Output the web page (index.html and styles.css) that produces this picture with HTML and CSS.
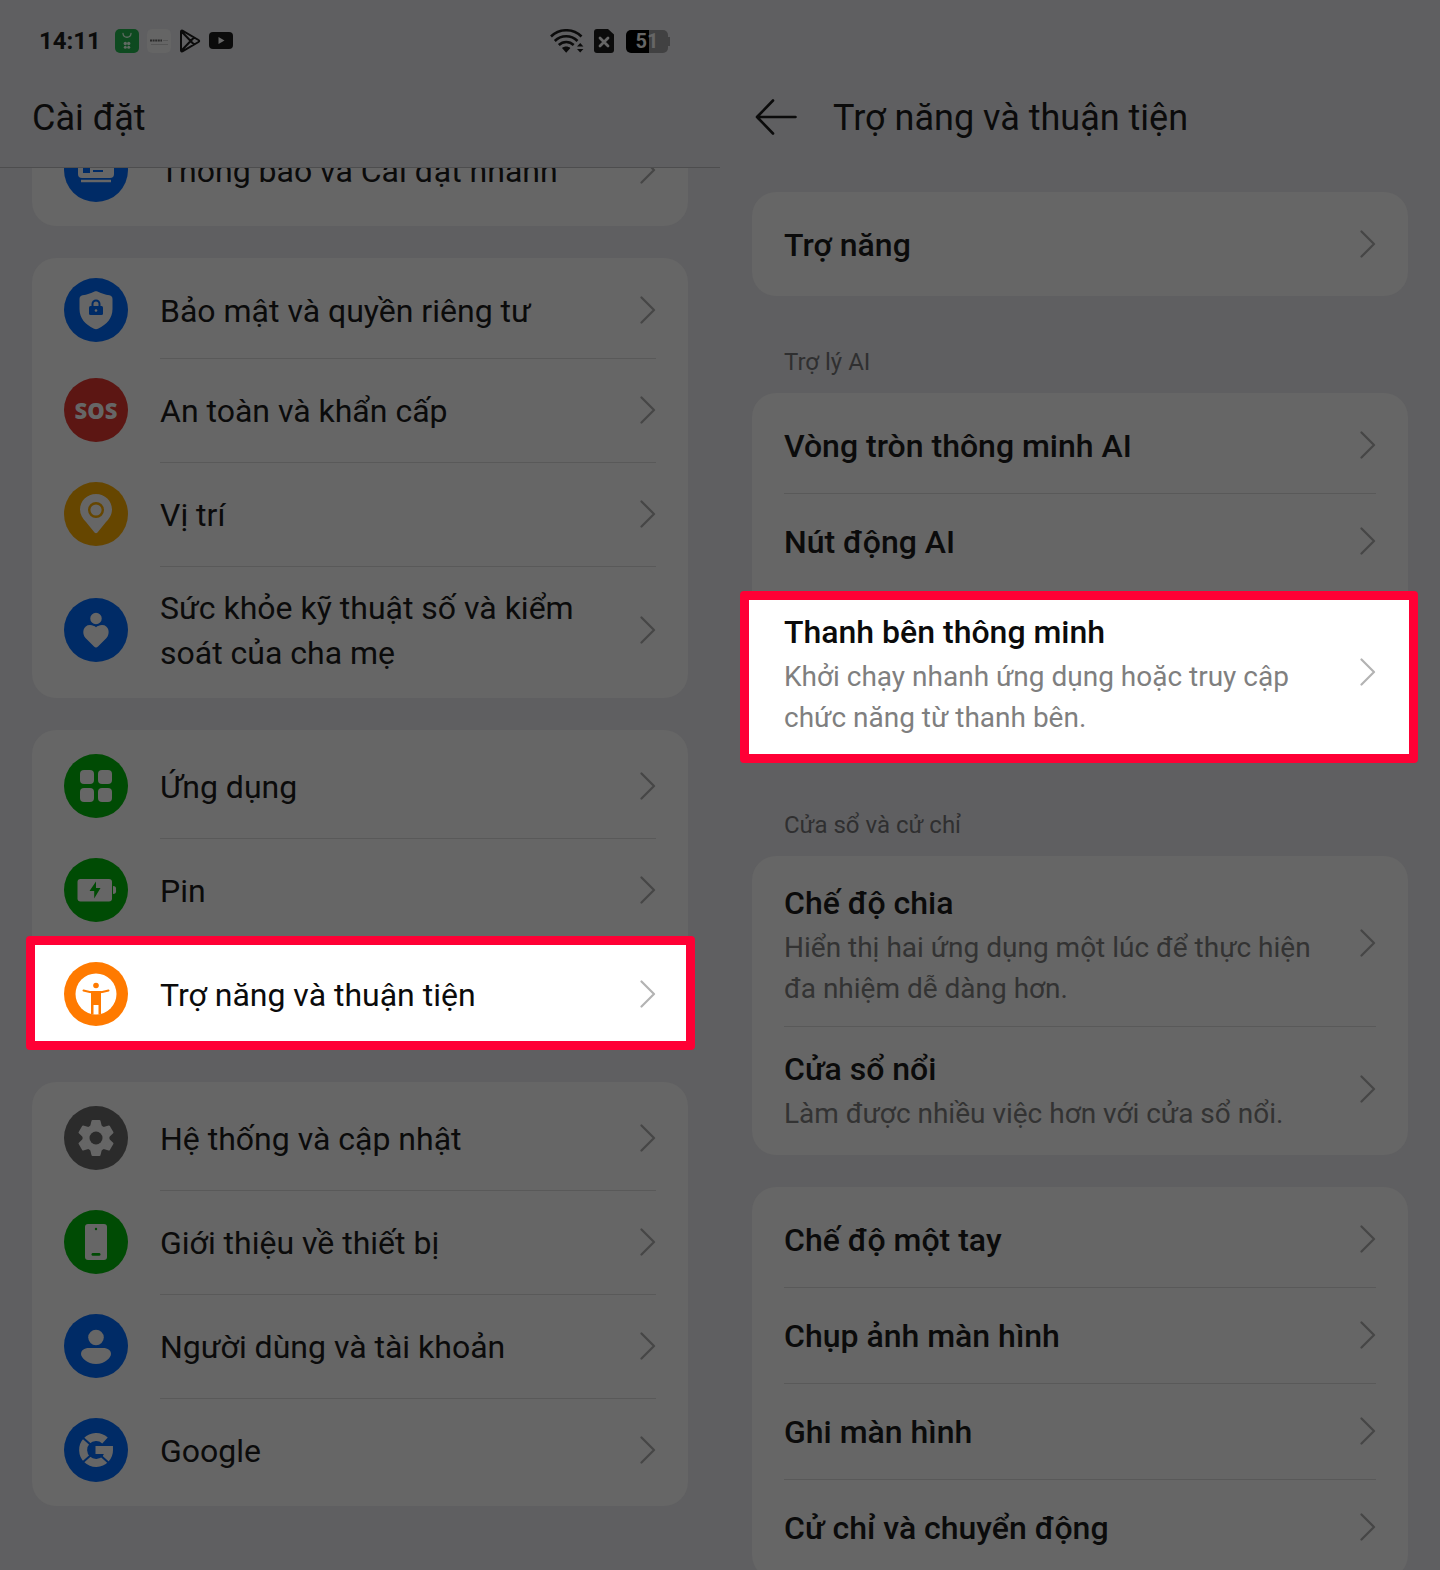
FILE: index.html
```html
<!DOCTYPE html>
<html lang="vi">
<head>
    <meta charset="UTF-8">
    <meta name="viewport" content="width=device-width, initial-scale=1.0">
    <title>Cài đặt</title>
    <link rel="stylesheet" href="styles.css">
</head>
<body>
    <svg class="defs" aria-hidden="true">
        <symbol id="chevron" viewBox="0 0 16 28">
            <path d="M1.5 1.5 14 14 1.5 26.5" fill="none" stroke="currentColor" stroke-width="2.2" stroke-linecap="round" stroke-linejoin="round"/>
        </symbol>
    </svg>
    <div class="screens">
        <section class="screen settings">
            <header class="top with-line">
                <div class="status">
                    <span class="time">14:11</span>
                    <svg class="app-icon" width="24" height="24" viewBox="0 0 24 24">
                        <rect width="24" height="24" rx="5" fill="#0e4a20"/>
                        <path d="M8 4.500c.5 5 7.500 5 8 0" fill="none" stroke="#5f6b62" stroke-width="1.300" stroke-linecap="round"/>
                        <g fill="#5f6b62"><circle cx="10.300" cy="14.500" r="1.700"/><circle cx="13.700" cy="14.500" r="1.700"/><circle cx="10.300" cy="18.300" r="1.500"/><circle cx="13.700" cy="18.300" r="1.500"/></g>
                    </svg>
                    <svg class="app-icon" width="24" height="24" viewBox="0 0 24 24">
                        <rect width="24" height="24" rx="5" fill="#656565"/>
                        <path d="M3 11.500h12" stroke="#2b2b2b" stroke-width="2" stroke-dasharray="2 .6"/>
                        <path d="M16 11.500h5M4 15.500h17" stroke="#555" stroke-width="1"/>
                    </svg>
                    <svg class="app-icon play" width="22" height="24" viewBox="0 0 22 24">
                        <path d="M2 2.800v18.400c0 1 .9 1.500 1.800 1L19.500 13c.9-.5.900-1.500 0-2L3.800 1.800C2.900 1.300 2 1.800 2 2.800zM2.500 2.500l12.500 13M2.500 21.500 15 8.500" fill="none" stroke="#0b0b0b" stroke-width="2" stroke-linejoin="round"/>
                    </svg>
                    <svg class="app-icon" width="24" height="18" viewBox="0 0 24 18">
                        <rect width="24" height="17" rx="4" fill="#0b0b0b"/>
                        <path d="M9.500 5v7l6-3.500z" fill="#666"/>
                    </svg>
                    <span class="spacer"></span>
                    <svg class="wifi" width="34" height="24" viewBox="0 0 34 24">
                        <g fill="none" stroke="#0b0b0b" stroke-width="2.600">
                            <path d="M1 7.500C9.500-.8 23-.8 31.500 7.500M4.800 12c6.500-6.300 16.200-6.300 22.700 0M8.800 16c4.300-4 10.600-4 14.900 0"/>
                        </g>
                        <path d="M12 19c2.400-2 6-2 8.400 0l-4.200 4.800zM27 17.500l3.200-3.500 3.200 3.500zM27 20l3.200 3.500 3.200-3.500z" fill="#0b0b0b"/>
                    </svg>
                    <svg class="sim" width="20" height="24" viewBox="0 0 20 24">
                        <path d="M3 0h11l6 5.500V21a3 3 0 0 1-3 3H3a3 3 0 0 1-3-3V3a3 3 0 0 1 3-3z" fill="#0b0b0b"/>
                        <path d="m6 9 8 8m0-8-8 8" stroke="#666" stroke-width="2.800" stroke-linecap="round"/>
                    </svg>
                    <span class="battery"><span class="five">5</span><span class="one">1</span></span>
                </div>
                <div class="title-bar"><h1>Cài đặt</h1></div>
            </header>
            <main class="list">
                <nav class="card scrolled">
                    <a class="row" href="#">
                        <svg class="icon" viewBox="0 0 64 64">
                            <circle cx="32" cy="32" r="32" fill="#002b66"/>
                            <rect x="14" y="16" width="36" height="24" rx="4" fill="#666"/>
                            <path d="M19 30h7v5h-7zM29 32h10v2H29z" fill="#002b66"/>
                            <path d="M17 43h30" stroke="#666" stroke-width="2.500"/>
                        </svg>
                        <span class="row-main"><span class="name">Thông báo và Cài đặt nhanh</span><svg class="chevron"><use href="#chevron"/></svg></span>
                    </a>
                </nav>
                <nav class="card">
                    <a class="row short" href="#">
                        <svg class="icon" viewBox="0 0 64 64">
                            <circle cx="32" cy="32" r="32" fill="#002b66"/>
                            <path d="M30.500 13.500c1-.5 2-.5 3 0 3.500 2 7.500 3 12 3.800 1.800.4 3 1.700 3 3.700v10c0 9-5.500 15.500-14.500 19.700-1.300.6-2.700.6-4 0C21 46.500 15.500 40 15.500 31V21c0-2 1.200-3.300 3-3.700 4.500-.8 8.500-1.800 12-3.800z" fill="#666"/>
                            <rect x="25" y="28" width="14" height="9" rx="1.500" fill="#002b66"/>
                            <path d="M28.500 29v-3a3.500 3.500 0 0 1 7 0v3" fill="none" stroke="#002b66" stroke-width="2"/>
                            <circle cx="32" cy="32.500" r="1.300" fill="#666"/>
                        </svg>
                        <span class="row-main"><span class="name">Bảo mật và quyền riêng tư</span><svg class="chevron"><use href="#chevron"/></svg></span>
                    </a>
                    <a class="row" href="#">
                        <span class="icon sos">SOS</span>
                        <span class="row-main"><span class="name">An toàn và khẩn cấp</span><svg class="chevron"><use href="#chevron"/></svg></span>
                    </a>
                    <a class="row" href="#">
                        <svg class="icon" viewBox="0 0 64 64">
                            <circle cx="32" cy="32" r="32" fill="#664600"/>
                            <path d="M32 12c9 0 16 7 16 15.500 0 5-2.500 9-6 12.500l-8.500 10.500c-1 1-2 1-3 0L22 40c-3.500-3.500-6-7.500-6-12.500C16 19 23 12 32 12z" fill="#666"/>
                            <circle cx="32" cy="28" r="6.800" fill="none" stroke="#664600" stroke-width="2.400"/>
                        </svg>
                        <span class="row-main"><span class="name">Vị trí</span><svg class="chevron"><use href="#chevron"/></svg></span>
                    </a>
                    <a class="row tall" href="#">
                        <svg class="icon" viewBox="0 0 64 64">
                            <circle cx="32" cy="32" r="32" fill="#002b66"/>
                            <path d="M30 48.500 21.500 40C17.500 35.500 19 27 26 27c2.500 0 4.500 1 6 2.200C33.500 28 35.500 27 38 27c7 0 8.500 8.500 4.500 13L34 48.500c-1.200 1.200-2.800 1.200-4 0z" fill="#666"/>
                            <circle cx="32" cy="20.500" r="6.500" fill="#666" stroke="#002b66" stroke-width="1.500"/>
                        </svg>
                        <span class="row-main"><span class="name">Sức khỏe kỹ thuật số và kiểm soát của cha mẹ</span><svg class="chevron"><use href="#chevron"/></svg></span>
                    </a>
                </nav>
                <nav class="card">
                    <a class="row" href="#">
                        <svg class="icon" viewBox="0 0 64 64">
                            <circle cx="32" cy="32" r="32" fill="#004b04"/>
                            <g fill="#666"><rect x="16" y="16" width="14" height="14" rx="4"/><rect x="34" y="16" width="14" height="14" rx="4"/><rect x="16" y="34" width="14" height="14" rx="4"/><rect x="34" y="34" width="14" height="14" rx="4"/></g>
                        </svg>
                        <span class="row-main"><span class="name">Ứng dụng</span><svg class="chevron"><use href="#chevron"/></svg></span>
                    </a>
                    <a class="row" href="#">
                        <svg class="icon" viewBox="0 0 64 64">
                            <circle cx="32" cy="32" r="32" fill="#004b04"/>
                            <rect x="13.500" y="21" width="34.500" height="22.500" rx="3" fill="#666"/>
                            <path d="M49 28c4 0 3 3.500 3 4s1 4-3 4z" fill="#666"/>
                            <path d="M32 23.500 25.500 33h4.700v7.500L36.500 30H32z" fill="#004b04"/>
                        </svg>
                        <span class="row-main"><span class="name">Pin</span><svg class="chevron"><use href="#chevron"/></svg></span>
                    </a>
                    <a class="row lit" href="#">
                        <svg class="icon" viewBox="0 0 64 64">
                            <circle cx="32" cy="32" r="32" fill="#ff7a00"/>
                            <circle cx="32" cy="32" r="20.500" fill="#fff"/>
                            <circle cx="32" cy="23.500" r="2.800" fill="#ff7a00"/>
                            <path d="M19.500 28.500c8 2.500 17 2.500 25 0" fill="none" stroke="#ff7a00" stroke-width="2" stroke-linecap="round"/>
                            <path d="M27 29h10v23.500h-2.500v-9.500h-5v9.500H27z" fill="#ff7a00"/>
                        </svg>
                        <span class="row-main"><span class="name">Trợ năng và thuận tiện</span><svg class="chevron"><use href="#chevron"/></svg></span>
                    </a>
                </nav>
                <nav class="card">
                    <a class="row" href="#">
                        <svg class="icon" viewBox="0 0 64 64">
                            <circle cx="32" cy="32" r="32" fill="#2b2b2b"/>
                            <g fill="#666" stroke="#666" stroke-width="2" stroke-linejoin="round">
                                <circle cx="32" cy="32" r="12.500"/>
                                <path id="tooth" d="M28.500 15h7l1.500 6h-10zM28.500 49h7l1.500-6h-10z"/>
                                <use href="#tooth" transform="rotate(60 32 32)"/>
                                <use href="#tooth" transform="rotate(120 32 32)"/>
                            </g>
                            <circle cx="32" cy="32" r="6.500" fill="#2b2b2b"/>
                        </svg>
                        <span class="row-main"><span class="name">Hệ thống và cập nhật</span><svg class="chevron"><use href="#chevron"/></svg></span>
                    </a>
                    <a class="row" href="#">
                        <svg class="icon" viewBox="0 0 64 64">
                            <circle cx="32" cy="32" r="32" fill="#004b04"/>
                            <rect x="21" y="14" width="22" height="36" rx="3" fill="#666"/>
                            <circle cx="32" cy="19" r="1.200" fill="#004b04"/>
                            <rect x="27.500" y="43" width="9" height="2.800" rx="1.400" fill="#004b04"/>
                        </svg>
                        <span class="row-main"><span class="name">Giới thiệu về thiết bị</span><svg class="chevron"><use href="#chevron"/></svg></span>
                    </a>
                    <a class="row" href="#">
                        <svg class="icon" viewBox="0 0 64 64">
                            <circle cx="32" cy="32" r="32" fill="#002b66"/>
                            <circle cx="32" cy="23.500" r="7.800" fill="#666"/>
                            <path d="M25 34h14c5 0 8 2.500 8 6s-6 10-15 10-15-6.500-15-10 3-6 8-6z" fill="#666"/>
                        </svg>
                        <span class="row-main"><span class="name">Người dùng và tài khoản</span><svg class="chevron"><use href="#chevron"/></svg></span>
                    </a>
                    <a class="row" href="#">
                        <svg class="icon" viewBox="0 0 64 64">
                            <circle cx="32" cy="32" r="32" fill="#002b66"/>
                            <path d="M41 22.500A13 13 0 1 0 41.500 41 13 13 0 0 0 45 32H31.500" fill="none" stroke="#666" stroke-width="8"/>
                            <path d="M18 19l9 8M18 45l9-8M36 37l10 9" stroke="#002b66" stroke-width="2"/>
                        </svg>
                        <span class="row-main"><span class="name">Google</span><svg class="chevron"><use href="#chevron"/></svg></span>
                    </a>
                </nav>
            </main>
        </section>

        <section class="screen access">
            <header class="top">
                <div class="status"></div>
                <div class="title-bar">
                    <a class="back" href="#" aria-label="Quay lại">
                        <svg width="42" height="36" viewBox="0 0 42 36"><path d="M40.500 18H2M18 1.500 2 18l16 16.500" fill="none" stroke="#0b0b0b" stroke-width="2.600" stroke-linecap="round" stroke-linejoin="round"/></svg>
                    </a>
                    <h1>Trợ năng và thuận tiện</h1>
                </div>
            </header>
            <main class="list">
                <nav class="card">
                    <a class="row short" href="#"><span class="row-main"><span class="name">Trợ năng</span><svg class="chevron"><use href="#chevron"/></svg></span></a>
                </nav>
                <h2>Trợ lý AI</h2>
                <nav class="card">
                    <a class="row short" href="#"><span class="row-main"><span class="name">Vòng tròn thông minh AI</span><svg class="chevron"><use href="#chevron"/></svg></span></a>
                    <a class="row short" href="#"><span class="row-main"><span class="name">Nút động AI</span><svg class="chevron"><use href="#chevron"/></svg></span></a>
                    <a class="row lit" href="#">
                        <span class="row-main detail">
                            <span class="name">Thanh bên thông minh<small>Khởi chạy nhanh ứng dụng hoặc truy cập chức năng từ thanh bên.</small></span>
                            <svg class="chevron"><use href="#chevron"/></svg>
                        </span>
                    </a>
                </nav>
                <h2>Cửa sổ và cử chỉ</h2>
                <nav class="card">
                    <a class="row" href="#">
                        <span class="row-main detail">
                            <span class="name">Chế độ chia<small>Hiển thị hai ứng dụng một lúc để thực hiện đa nhiệm dễ dàng hơn.</small></span>
                            <svg class="chevron"><use href="#chevron"/></svg>
                        </span>
                    </a>
                    <a class="row" href="#">
                        <span class="row-main detail">
                            <span class="name">Cửa sổ nổi<small>Làm được nhiều việc hơn với cửa sổ nổi.</small></span>
                            <svg class="chevron"><use href="#chevron"/></svg>
                        </span>
                    </a>
                </nav>
                <nav class="card">
                    <a class="row short" href="#"><span class="row-main"><span class="name">Chế độ một tay</span><svg class="chevron"><use href="#chevron"/></svg></span></a>
                    <a class="row short" href="#"><span class="row-main"><span class="name">Chụp ảnh màn hình</span><svg class="chevron"><use href="#chevron"/></svg></span></a>
                    <a class="row short" href="#"><span class="row-main"><span class="name">Ghi màn hình</span><svg class="chevron"><use href="#chevron"/></svg></span></a>
                    <a class="row short" href="#"><span class="row-main"><span class="name">Cử chỉ và chuyển động</span><svg class="chevron"><use href="#chevron"/></svg></span></a>
                </nav>
            </main>
        </section>
    </div>
</body>
</html>
```
FILE: styles.css
```css
* {
    box-sizing: border-box;
}
body {
    margin: 0;
    font-family: Roboto, "Liberation Sans", sans-serif;
    background-color: #5f5f61;
    color: #0b0b0b;
}
a {
    color: inherit;
    text-decoration: none;
}
.defs {
    display: none;
}
.screens {
    display: grid;
    grid-template-columns: 1fr 1fr;
    height: 100vh;
    overflow: hidden;
}
.screen {
    min-width: 0;
}
.top {
    height: 168px;
}
.with-line {
    border-bottom: 1px solid #4d4d4e;
}
.status {
    display: flex;
    align-items: center;
    height: 66px;
    padding: 16px 52px 0 39px;
}
.time {
    margin-right: 14px;
    font-size: 24px;
    font-weight: 700;
}
.app-icon {
    margin-right: 8px;
}
.spacer {
    flex: 1;
}
.sim {
    margin: 0 12px 0 10px;
}
.battery {
    position: relative;
    display: flex;
    justify-content: center;
    width: 42px;
    height: 23px;
    border-radius: 5px;
    background: linear-gradient(90deg, #000 55%, #414142 55%);
    font-size: 20px;
    line-height: 23px;
    font-weight: 700;
    color: #666;
}
.battery::after {
    content: "";
    position: absolute;
    top: 7px;
    right: -2px;
    width: 2px;
    height: 9px;
    background: #414142;
}
.title-bar {
    display: flex;
    align-items: center;
    height: 101px;
    padding: 0 32px;
}
.back {
    display: flex;
    margin: 0 36px 0 3px;
}
h1 {
    margin: 0;
    padding-top: 2px;
    font-size: 36px;
    font-weight: 400;
}
h2 {
    margin: 0;
    padding: 50px 32px 15px;
    font-size: 24px;
    line-height: 32px;
    font-weight: 400;
    color: #2f2f30;
}
.list {
    padding: 0 32px;
}
.settings .list {
    overflow: hidden;
}
.access .list {
    padding-top: 24px;
}
.card {
    padding: 4px 0;
    border-radius: 24px;
    background-color: #666;
}
.card + .card {
    margin-top: 32px;
}
.scrolled {
    margin-top: -54px;
}
.row {
    position: relative;
    display: flex;
    align-items: center;
    gap: 32px;
    min-height: 104px;
    padding: 0 32px;
}
.row.short {
    min-height: 96px;
}
.row.tall {
    min-height: 128px;
}
.icon {
    flex: none;
    width: 64px;
    height: 64px;
}
.sos {
    border-radius: 50%;
    background-color: #5c1613;
    font-family: "Open Sans", sans-serif;
    font-size: 22px;
    line-height: 64px;
    font-weight: 800;
    text-align: center;
    color: #666;
}
.row-main {
    flex: 1;
    display: flex;
    align-items: center;
    justify-content: space-between;
    align-self: stretch;
}
.row + .row .row-main {
    box-shadow: inset 0 1px #595959;
}
.name {
    padding-top: 2px;
    font-size: 32px;
    line-height: 45px;
    max-width: 440px;
}
.access .name {
    max-width: 540px;
    font-weight: 500;
}
.detail {
    padding: 17px 0;
}
.detail .name {
    line-height: 48px;
}
small {
    display: block;
    font-size: 28px;
    line-height: 41px;
    font-weight: 400;
    color: #333;
}
.chevron {
    flex: none;
    width: 16px;
    height: 28px;
    color: #464646;
}

/* highlighted row */
.lit {
    z-index: 1;
}
.lit::before {
    content: "";
    position: absolute;
    z-index: -1;
    top: -6px;
    right: -7px;
    bottom: -4px;
    left: -6px;
    border: 9px solid #ff0035;
    border-radius: 4px;
    background-color: #fff;
}
.access .lit::before {
    top: 2px;
    right: -10px;
    bottom: -8px;
    left: -12px;
}
.row + .lit .row-main {
    box-shadow: none;
}
.lit small {
    color: #7f7f7f;
}
.lit .chevron {
    color: #b3b3b3;
}
```
